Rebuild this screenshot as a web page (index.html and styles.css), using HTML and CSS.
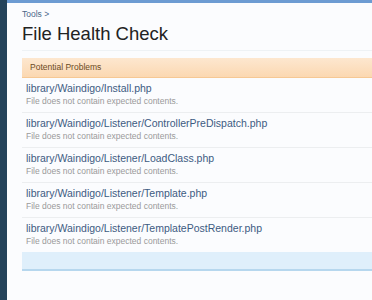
FILE: index.html
```html
<!DOCTYPE html>
<html lang="en">
<head>
    <meta charset="UTF-8">
    <meta name="viewport" content="width=device-width, initial-scale=1.0">
    <title>File Health Check</title>
    <link rel="stylesheet" href="styles.css">
</head>
<body>

    <div class="sidebar"></div>

    <div class="main">
        <div class="breadcrumb">Tools &gt;</div>
        <h1 class="title">File Health Check</h1>

        <div class="section">
            <h2 class="section-head">Potential Problems</h2>

            <div class="problem">
                <div class="file">library/Waindigo/Install.php</div>
                <div class="note">File does not contain expected contents.</div>
            </div>
            <div class="problem">
                <div class="file">library/Waindigo/Listener/ControllerPreDispatch.php</div>
                <div class="note">File does not contain expected contents.</div>
            </div>
            <div class="problem">
                <div class="file">library/Waindigo/Listener/LoadClass.php</div>
                <div class="note">File does not contain expected contents.</div>
            </div>
            <div class="problem">
                <div class="file">library/Waindigo/Listener/Template.php</div>
                <div class="note">File does not contain expected contents.</div>
            </div>
            <div class="problem last">
                <div class="file">library/Waindigo/Listener/TemplatePostRender.php</div>
                <div class="note">File does not contain expected contents.</div>
            </div>

            <div class="section-foot"></div>
        </div>
    </div>

</body>
</html>
```

FILE: styles.css
```css
/* Grundlayout */
body {
    margin: 0;
    display: flex;
    min-height: 300px;
    font-family: "Liberation Sans", Arial, sans-serif;
    background-color: #fbfcfe;
    overflow: hidden;
}

.sidebar {
    width: 7px;
    flex-shrink: 0;
    background-color: #24435a;
}

.main {
    flex: 1;
    border-top: 3px solid #6c9bd2;
    padding: 4px 0 0 15px;
    background-color: #fbfcfe;
}

.breadcrumb {
    font-size: 8.5px;
    color: #4a6688;
    height: 14px;
    line-height: 14px;
}

.title {
    margin: 0;
    font-size: 18.5px;
    font-weight: normal;
    color: #222;
    line-height: 26px;
    padding-bottom: 3px;
    border-bottom: 1px solid #eef2f5;
}

.section {
    margin-top: 7px;
}

.section-head {
    margin: 0;
    font-size: 8.5px;
    font-weight: normal;
    color: #6b4a24;
    height: 19px;
    line-height: 19px;
    padding-left: 8px;
    background: linear-gradient(to bottom, #fde7cf, #fbd8b2);
    border-bottom: 1px solid #f6c894;
}

.problem {
    padding: 3px 0 4px 4px;
    border-bottom: 1px solid #eceef0;
}

.problem.last {
    border-bottom: none;
    padding-bottom: 4px;
}

.file {
    font-size: 10.5px;
    color: #3d5b82;
    line-height: 14px;
}

.note {
    font-size: 8.5px;
    color: #9a9a9a;
    line-height: 13px;
}

.section-foot {
    height: 17px;
    background-color: #dfeffb;
    border-bottom: 2px solid #b6d7ee;
}
```
